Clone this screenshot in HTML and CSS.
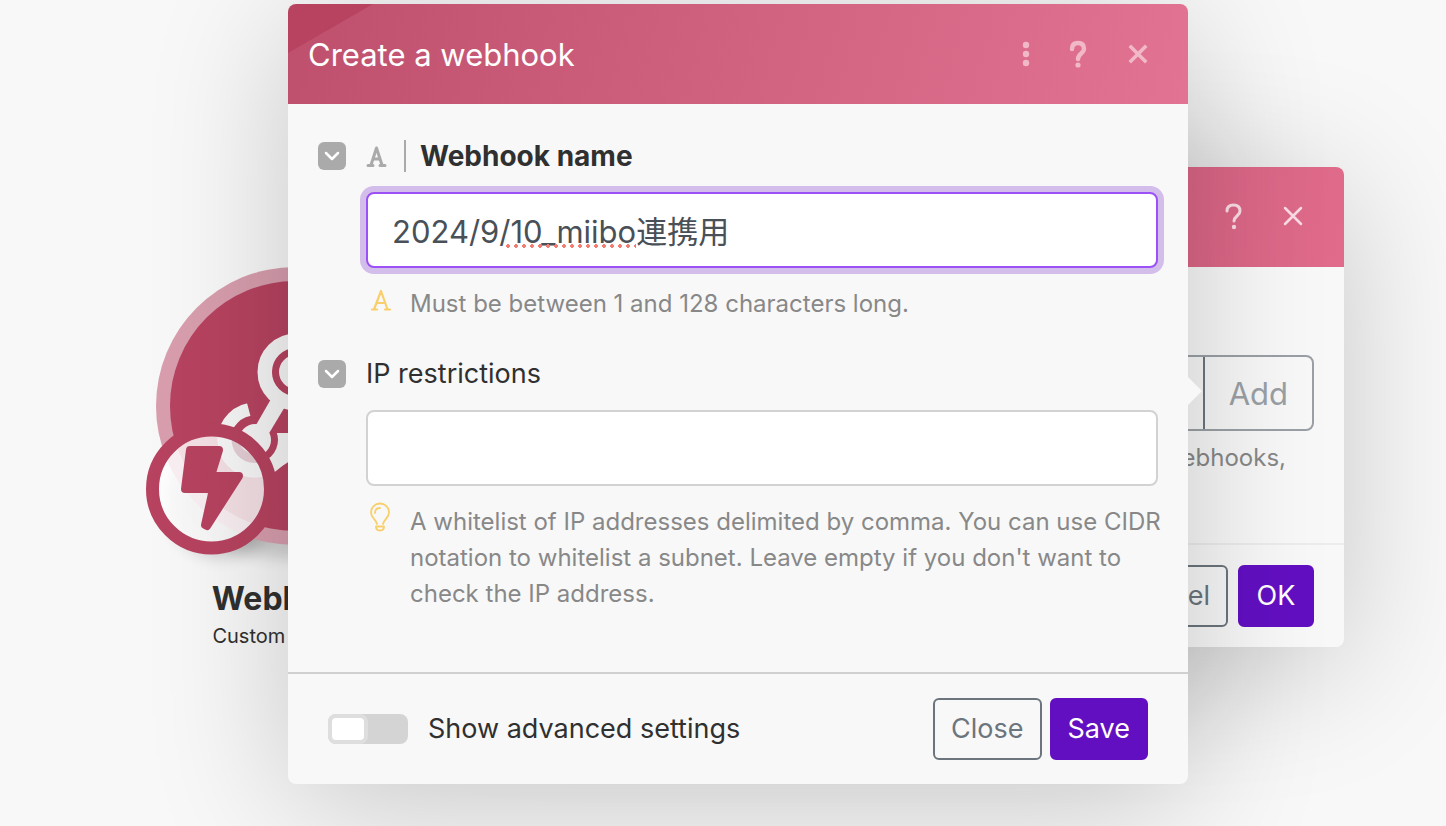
FILE: index.html
```html
<!DOCTYPE html>
<html lang="en">
<head>
<meta charset="utf-8">
<title>Create a webhook</title>
<link rel="stylesheet" href="styles.css">
</head>
<body>
<main class="canvas">
  <section class="node">
    <svg class="node-art" viewBox="140 256 310 310" aria-hidden="true">
      <defs>
        <filter id="soft" x="-50%" y="-50%" width="200%" height="200%"><feGaussianBlur stdDeviation="8"/></filter>
        <clipPath id="badgeClip"><circle cx="211.500" cy="489" r="54"/></clipPath>
      </defs>
      <circle cx="222" cy="502" r="56" fill="#000" opacity=".16" filter="url(#soft)"/>
      <ellipse cx="295" cy="540" rx="70" ry="18" fill="#000" opacity=".16" filter="url(#soft)"/>
      <circle cx="295" cy="406" r="139" fill="#d89eae"/>
      <circle cx="295" cy="406" r="125" fill="#b74360"/>
      <circle cx="255" cy="440" r="31" fill="none" stroke="#f7f7f7" stroke-width="13"/>
      <path d="M247 403L251 418L264 431H320V390H264Z" fill="#b74360"/>
      <path d="M264 420H300V433H277L277 452H262Z" fill="#b74360"/>
      <path d="M277 433H310V448L276 470C274 465 272 461 267 458C275 450 277 443 277 433Z" fill="#f7f7f7"/>
      <circle cx="296" cy="372" r="31" fill="none" stroke="#f7f7f7" stroke-width="15"/>
      <circle cx="296" cy="372" r="24" fill="#b74360"/>
      <circle cx="255" cy="440" r="23" fill="#b74360"/>
      <path d="M271 399L248 439L265 440L292 395Z" fill="#f7f7f7"/>
      <circle cx="296" cy="372" r="17" fill="#f7f7f7"/>
      <circle cx="255" cy="440" r="16" fill="#f7f7f7"/>
      <circle cx="211.500" cy="489" r="54" fill="#fff" opacity=".84"/>
      <g clip-path="url(#badgeClip)">
        <path d="M218 436A37 37 0 0 0 255 477C264 477 270 473 276 468V436Z" fill="#f7f7f7"/>
        <path d="M232 436A23 23 0 0 0 255 463C263 463 268 459 273 454V436Z" fill="#e4ced5"/>
        <circle cx="255" cy="438" r="16" fill="#f7f7f7"/>
      </g>
      <circle cx="211.500" cy="489" r="59" fill="none" stroke="#b74360" stroke-width="13"/>
      <path d="M190 450H219L211 476H239L207 526L205 525L213 489H185Z" fill="#b74360" stroke="#b74360" stroke-width="8" stroke-linejoin="round"/>
    </svg>
    <h2 class="node-title">Webhooks</h2>
    <p class="node-sub">Custom webhook</p>
  </section>

  <section class="dialog dialog-back" aria-label="Webhooks">
    <header class="head head-back">
      <button class="icon-btn" aria-label="Help"><svg width="20" height="28" viewBox="0 0 20 28"><path d="M4 9C4 5 6 3 10.500 3S17 5 17 9C17 14 11 14 11 19" fill="none" stroke="currentColor" stroke-width="3" stroke-linecap="round"/><circle cx="11" cy="25" r="2.200" fill="currentColor"/></svg></button>
      <button class="icon-btn" aria-label="Close"><svg width="20" height="20" viewBox="0 0 20 20"><path d="M2 2L18 18M18 2L2 18" stroke="currentColor" stroke-width="2.500" stroke-linecap="round"/></svg></button>
    </header>
    <div class="back-body">
      <div class="back-row"><span class="back-select"></span><button class="add">Add</button></div>
      <p class="back-help">create webhooks,</p>
    </div>
    <footer class="back-foot"><button class="btn btn-outline">Cancel</button><button class="btn btn-solid">OK</button></footer>
  </section>

  <section class="dialog dialog-main" role="dialog" aria-labelledby="title">
    <header class="head head-main">
      <h1 class="title" id="title">Create a webhook</h1>
      <button class="icon-btn" aria-label="More"><svg width="8" height="28" viewBox="0 0 8 28" fill="currentColor"><circle cx="4" cy="5" r="3.200"/><circle cx="4" cy="14" r="3.200"/><circle cx="4" cy="23" r="3.200"/></svg></button>
      <button class="icon-btn" aria-label="Help"><svg width="20" height="28" viewBox="0 0 20 28"><path d="M4 9C4 5 6 3 10 3S16 5 16 9C16 13 10 14 10 19" fill="none" stroke="currentColor" stroke-width="4.500" stroke-linecap="round"/><circle cx="10" cy="25" r="2.600" fill="currentColor"/></svg></button>
      <button class="icon-btn" aria-label="Close"><svg width="20" height="20" viewBox="0 0 20 20"><path d="M3 3L17 17M17 3L3 17" stroke="currentColor" stroke-width="3.600" stroke-linecap="square"/></svg></button>
    </header>
    <div class="body">
      <div class="field">
        <div class="label-row">
          <button class="fold" aria-label="Collapse"><svg width="16" height="10" viewBox="0 0 16 10"><path d="M2 2L8 8L14 2" fill="none" stroke="#fff" stroke-width="2.500" stroke-linecap="round" stroke-linejoin="round"/></svg></button>
          <svg class="type" width="22" height="22" viewBox="0 0 22 22" fill="none" stroke="#aaa" stroke-width="3" stroke-linecap="round" stroke-linejoin="round"><path d="M5 20L10.500 3L16 20M7 14H14M2 20.500H7M14 20.500H19"/></svg>
          <label class="label label-strong" for="name">Webhook name</label>
        </div>
        <div class="control">
          <input class="input input-focus" id="name" type="text" value="2024/9/10_miibo連携用" spellcheck="false">
          <span class="spelling"></span>
        </div>
        <div class="help">
          <svg class="help-icon" width="24" height="30" viewBox="0 0 24 30" fill="none" stroke="#f9cf6b" stroke-width="2.200" stroke-linecap="round" stroke-linejoin="round"><path d="M6 25.500L13 7L19.500 25.500M9 19H17M4 25.500H9M17 25.500H22"/></svg>
          <p class="help-text">Must be between 1 and 128 characters long.</p>
        </div>
      </div>
      <div class="field">
        <div class="label-row">
          <button class="fold" aria-label="Collapse"><svg width="16" height="10" viewBox="0 0 16 10"><path d="M2 2L8 8L14 2" fill="none" stroke="#fff" stroke-width="2.500" stroke-linecap="round" stroke-linejoin="round"/></svg></button>
          <label class="label" for="ip">IP restrictions</label>
        </div>
        <div class="control"><input class="input" id="ip" type="text"></div>
        <div class="help">
          <svg class="help-icon" width="24" height="30" viewBox="0 0 24 30" fill="none" stroke="#f9cf6b" stroke-width="1.800" stroke-linecap="round" stroke-linejoin="round"><path d="M9 22C8 17 3 16 3 10.500A9 9 0 0 1 21 10.500C21 16 16 17 15 22M7 11C7 8 9 6 12 6M8 24.500H16C16 27 14.500 28.500 12 28.500S8 27 8 24.500Z"/></svg>
          <p class="help-text">A whitelist of IP addresses delimited by comma. You can use CIDR notation to whitelist a subnet. Leave empty if you don't want to check the IP address.</p>
        </div>
      </div>
    </div>
    <footer class="foot">
      <input class="switch" id="advanced" type="checkbox">
      <label class="label foot-label" for="advanced">Show advanced settings</label>
      <button class="btn btn-outline">Close</button>
      <button class="btn btn-solid">Save</button>
    </footer>
  </section>
</main>
</body>
</html>
```
FILE: styles.css
```css
* { box-sizing: border-box; }
body {
  margin: 0;
  background: #f8f8f8;
  color: #303030;
  font-family: Inter, "Noto Sans CJK JP", sans-serif;
}
h1, h2, p { margin: 0; font-weight: 400; }
button { font: inherit; cursor: pointer; }

.canvas { position: relative; min-height: 100vh; overflow: hidden; }

.node { position: absolute; left: 140px; top: 256px; width: 310px; text-align: center; }
.node-art { display: block; width: 310px; height: 310px; overflow: visible; }
.node-title { margin-top: 14px; font-size: 32px; line-height: 38px; font-weight: 700; }
.node-sub { margin-top: 6px; font-size: 20px; line-height: 24px; }

.dialog {
  position: absolute;
  display: flex;
  flex-direction: column;
  border-radius: 8px;
  background: #f8f8f8;
  box-shadow: 0 20px 140px rgba(0, 0, 0, .2);
}
.dialog-back { left: 444px; right: 102px; top: 167px; }
.dialog-main { left: 288px; right: 258px; top: 4px; }
.dialog-main::after {
  content: "";
  position: absolute;
  left: 100%;
  top: 373px;
  border: 14px solid transparent;
  border-left-color: #f8f8f8;
  border-right-width: 0;
}

.head { display: flex; align-items: center; height: 100px; border-radius: 8px 8px 0 0; }
.head-main {
  padding: 0 30px 0 20px;
  background:
    linear-gradient(150deg, #b74360 42px, transparent 43px),
    linear-gradient(105deg, #be506d, #e27392);
}
.head-back {
  justify-content: flex-end;
  padding: 0 31px 3px;
  background: linear-gradient(105deg, #be506d, #e06b8b);
}
.title { flex: 1; padding-top: 2px; color: #fff; font-size: 31px; line-height: 40px; }
.icon-btn {
  display: grid;
  place-items: center;
  width: 40px;
  height: 40px;
  margin-left: 20px;
  padding: 0;
  border: 0;
  background: none;
  color: #f1b8c8;
}
.icon-btn:first-of-type { margin-left: 0; margin-right: -8px; }
.head-back .icon-btn { color: #fbdce5; }
.head-back .icon-btn:first-of-type { margin-right: 0; }

.body { padding: 34px 30px 60px; }
.field + .field { margin-top: 34px; }
.label-row { display: flex; align-items: center; height: 36px; }
.fold {
  display: grid;
  place-items: center;
  width: 28px;
  height: 28px;
  margin-right: 20px;
  padding: 0;
  border: 0;
  border-radius: 6px;
  background: #aaa;
}
.label { font-size: 27px; line-height: 34px; }
.label-strong {
  margin-left: 16px;
  padding-left: 14px;
  border-left: 2px solid #aaa;
  font-size: 28px;
  font-weight: 700;
  line-height: 32px;
}
.control { position: relative; margin: 18px 0 0 48px; }
.input {
  display: block;
  width: 100%;
  height: 76px;
  padding: 0 24px 2px;
  border: 2px solid #d2d2d2;
  border-radius: 8px;
  outline: 0;
  background: #fff;
  color: #495057;
  font: inherit;
  font-size: 31px;
}
.input-focus { border-color: #9b51f5; box-shadow: 0 0 0 6px #d3bdeb; }
.spelling {
  position: absolute;
  left: 140px;
  bottom: 20px;
  width: 130px;
  height: 4px;
  background: radial-gradient(circle at 2px 2px, #f47c70 2px, transparent 2px) 0 0 / 8px 4px;
}
.help { display: flex; margin: 18px -8px 0 50px; }
.help-icon { flex: none; margin: -2px 18px 0 0; }
.help-text { color: #888; font-size: 24px; line-height: 36px; }

.foot {
  display: flex;
  align-items: center;
  height: 112px;
  padding: 0 40px;
  border-top: 2px solid #d0d0d0;
}
.switch {
  appearance: none;
  width: 80px;
  height: 30px;
  margin: 0 20px 0 0;
  padding: 4px;
  border-radius: 8px;
  background: #d4d4d4;
}
.switch::before {
  content: "";
  display: block;
  width: 32px;
  height: 22px;
  border-radius: 4px;
  background: #fff;
  box-shadow: 0 0 0 4px #dedede;
}
.foot-label { flex: 1; }
.btn {
  min-width: 76px;
  height: 62px;
  padding: 0 16px;
  border: 2px solid #6c757d;
  border-radius: 6px;
  background: transparent;
  color: #6c757d;
  font-size: 27px;
  line-height: 34px;
}
.btn + .btn { margin-left: 8px; }
.btn-solid { border-color: #620fc2; background: #620fc2; color: #fff; }

.back-body { padding: 88px 30px 0; }
.back-row { display: flex; height: 76px; border: 2px solid #9aa0a5; border-radius: 8px; }
.back-select { flex: 1; }
.add {
  padding: 0 24px;
  border: 0;
  border-left: 2px solid #6c757d;
  background: none;
  color: #9aa0a5;
  font-size: 31px;
}
.back-help { padding-right: 28px; margin-top: 9px; color: #888; font-size: 24px; line-height: 36px; text-align: right; }
.back-foot {
  display: flex;
  justify-content: flex-end;
  margin-top: 67px;
  padding: 20px 30px;
  border-top: 2px solid #ececec;
}
.back-foot .btn-solid { margin-left: 10px; }
```
